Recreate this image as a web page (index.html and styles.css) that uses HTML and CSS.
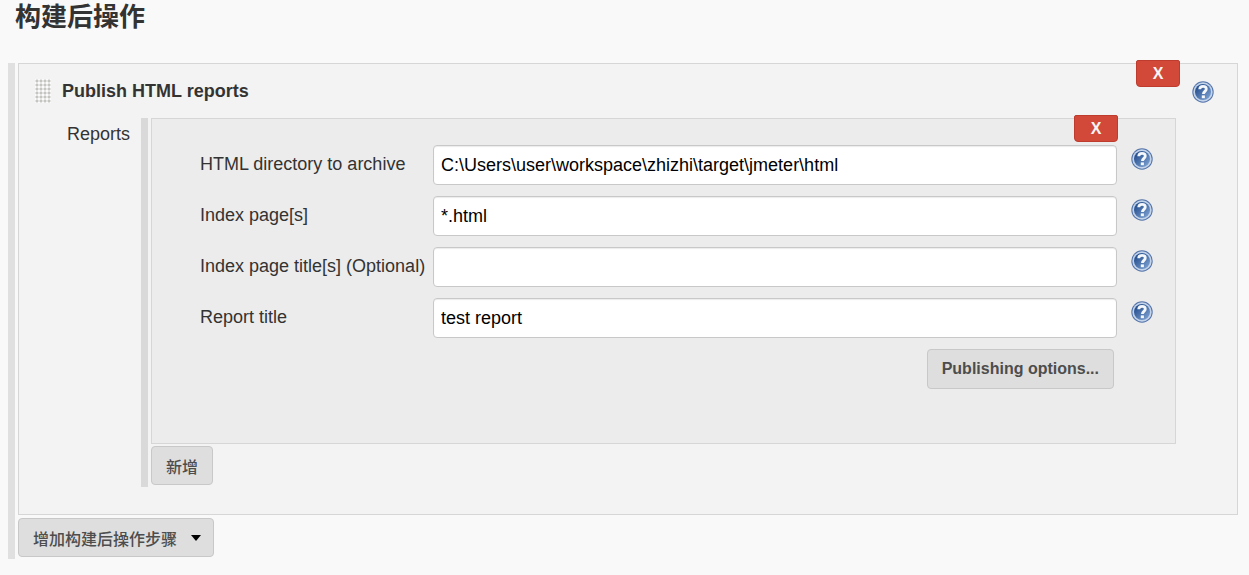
FILE: index.html
```html
<!DOCTYPE html>
<html lang="zh-CN">
<head>
  <meta charset="UTF-8" />
  <meta name="viewport" content="width=device-width, initial-scale=1.0" />
  <title>构建后操作</title>
  <link rel="stylesheet" href="styles.css">
</head>
<body>
  <!-- shared help icon -->
  <svg class="sprite" width="0" height="0" aria-hidden="true">
    <defs>
      <linearGradient id="helpFill" x1="0" y1="0" x2="1" y2="1">
        <stop offset="0.2" stop-color="#2b5492" />
        <stop offset="1" stop-color="#86a9d8" />
      </linearGradient>
    </defs>
    <symbol id="help" viewBox="0 0 22 22">
      <circle cx="11" cy="11" r="10.7" fill="#5474aa" />
      <circle cx="11" cy="11" r="9.7" fill="#c3d3e9" />
      <circle cx="11" cy="11" r="8" fill="url(#helpFill)" />
      <path d="M7.7 8.2C7.8 6.1 9.1 5.3 11 5.3c2.1 0 3.3 1 3.3 2.7 0 2.3-2.9 2.5-2.9 5.1" fill="none" stroke="#f4f7fb" stroke-width="2.8" />
      <rect x="9.8" y="14.4" width="3.1" height="2.8" fill="#f4f7fb" />
    </symbol>
  </svg>

  <h1>构建后操作</h1>

  <form class="repeated outer-list">
    <section class="chunk publisher">
      <button type="button" class="delete-btn">X</button>
      <div class="chunk-header">
        <span class="dd-handle"></span>
        <h2>Publish HTML reports</h2>
        <a href="#" class="help-link" aria-label="Help: Publish HTML reports"><svg><use href="#help" /></svg></a>
      </div>

      <div class="reports-row">
        <span class="reports-label">Reports</span>
        <div class="repeated inner-list">
          <div class="chunk report">
            <button type="button" class="delete-btn">X</button>
            <div class="form-grid">
              <label for="reportDir">HTML directory to archive</label>
              <input type="text" id="reportDir" name="reportDir" value="C:\Users\user\workspace\zhizhi\target\jmeter\html" />
              <a href="#" class="help-link" aria-label="Help: HTML directory to archive"><svg><use href="#help" /></svg></a>

              <label for="reportFiles">Index page[s]</label>
              <input type="text" id="reportFiles" name="reportFiles" value="*.html" />
              <a href="#" class="help-link" aria-label="Help: Index page[s]"><svg><use href="#help" /></svg></a>

              <label for="reportTitles">Index page title[s] (Optional)</label>
              <input type="text" id="reportTitles" name="reportTitles" value="" />
              <a href="#" class="help-link" aria-label="Help: Index page title[s]"><svg><use href="#help" /></svg></a>

              <label for="reportName">Report title</label>
              <input type="text" id="reportName" name="reportName" value="test report" />
              <a href="#" class="help-link" aria-label="Help: Report title"><svg><use href="#help" /></svg></a>

              <button type="button" class="btn options-btn">Publishing options...</button>
            </div>
          </div>
          <button type="button" class="btn add-btn">新增</button>
        </div>
      </div>
    </section>
    <button type="button" class="btn add-btn menu-btn">增加构建后操作步骤
      <svg class="caret" viewBox="0 0 10 6"><path d="M0 0h10L5 6z" /></svg>
    </button>
  </form>
</body>
</html>
```
FILE: styles.css
```css
:root {
  --text: #333333;
  --page: #f9f9f9;
  --red: #d24939;
}

* {
  box-sizing: border-box;
}

body {
  margin: 0;
  padding: 0 11px 16px 8px;
  background: var(--page);
  color: var(--text);
  font-family: "Liberation Sans", "Noto Sans CJK SC", sans-serif;
  font-size: 18px;
  line-height: 24px;
}

.sprite {
  position: absolute;
}

h1 {
  margin: 0 0 29px;
  padding-left: 7px;
  font-size: 26px;
  line-height: 34px;
}

h2 {
  flex: 1;
  margin: 0;
  font-size: 18px;
  line-height: 24px;
}

/* repeatable blocks with the grey bar on the left */
.repeated {
  padding-left: 3px;
  border-left: 7px solid #e0e0e0;
}

.outer-list {
  padding-bottom: 2px;
}

.inner-list {
  flex: 1;
  padding-bottom: 2px;
  border-left-color: #d9d9d9;
}

.chunk {
  position: relative;
  border: 1px solid #d6d6d6;
}

.publisher {
  margin-bottom: 3px;
  padding: 15px 23px 27px 16px;
  background: #f3f3f3;
}

.report {
  margin-bottom: 2px;
  padding: 26px 23px 54px 48px;
  background: #ececec;
}

.chunk-header {
  display: flex;
  align-items: flex-start;
}

.chunk-header .help-link {
  padding-top: 2px;
}

.dd-handle {
  width: 16px;
  height: 24px;
  margin-right: 11px;
  background: radial-gradient(circle at 2px 2px, #c4c4c0 1px, #fbfbfb 2px) 0 0 / 4px 4px;
}

.reports-row {
  display: flex;
  align-items: flex-start;
  margin-right: 38px;
  padding-top: 15px;
}

.reports-label {
  width: 106px;
  padding: 4px 0 0 32px;
}

.form-grid {
  display: grid;
  grid-template-columns: 219px 1fr 21px;
  gap: 11px 14px;
}

.form-grid label {
  padding-top: 7px;
  white-space: nowrap;
}

.form-grid .help-link {
  padding-top: 3px;
}

input[type="text"] {
  width: 100%;
  min-width: 0;
  height: 40px;
  padding: 0 7px;
  border: 1px solid #c8c8c8;
  border-radius: 4px;
  background: #fff;
  box-shadow: inset 0 1px 1px rgba(0, 0, 0, 0.08);
  color: #000;
  font-family: inherit;
  font-size: 18px;
}

.help-link svg {
  display: block;
  width: 22px;
  height: 22px;
}

.btn {
  display: block;
  height: 39px;
  padding: 0 14px;
  border: 1px solid #c8c8c8;
  border-radius: 4px;
  background: #dedede;
  color: #4d4d4d;
  font-family: inherit;
  font-size: 16px;
  font-weight: bold;
  cursor: pointer;
}

.add-btn {
  font-weight: 500;
}

.options-btn {
  grid-column: 2;
  justify-self: end;
  height: 40px;
  margin-right: 3px;
}

.menu-btn {
  display: flex;
  align-items: center;
  gap: 14px;
  padding-right: 12px;
}

.caret {
  width: 10px;
  height: 6px;
  fill: #000;
}

.delete-btn {
  position: absolute;
  top: -4px;
  right: 57px;
  width: 44px;
  height: 27px;
  padding: 0;
  border: 1px solid #bd3c2e;
  border-radius: 2px 2px 4px 4px;
  background: var(--red);
  color: #f5f5f5;
  font-family: inherit;
  font-size: 16px;
  font-weight: bold;
  cursor: pointer;
}
```
